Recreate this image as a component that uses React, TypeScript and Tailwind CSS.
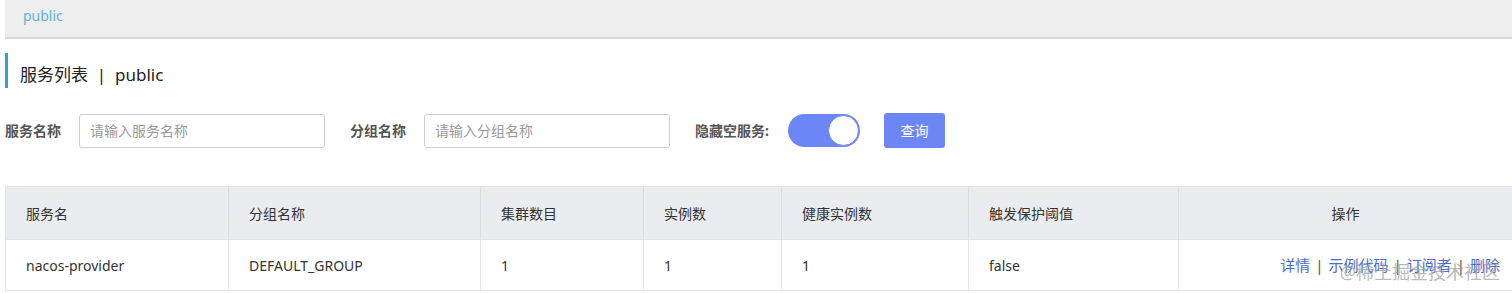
import { useState } from 'react';

const font = { fontFamily: '"Noto Sans", "Noto Sans CJK SC", sans-serif' };

const columns = [
  { title: '服务名', w: 'w-[223px]' },
  { title: '分组名称', w: 'w-[252px]' },
  { title: '集群数目', w: 'w-[163px]' },
  { title: '实例数', w: 'w-[138px]' },
  { title: '健康实例数', w: 'w-[187px]' },
  { title: '触发保护阈值', w: 'w-[210px]' },
];

const row = ['nacos-provider', 'DEFAULT_GROUP', '1', '1', '1', 'false'];

export default function App() {
  const [hideEmpty, setHideEmpty] = useState(true);

  return (
    <div className="h-[293px] w-[1512px] overflow-hidden bg-white text-[14px] text-[#333]" style={font}>
      <div className="ml-[5px] flex h-[39px] items-start border-b-2 border-[#d9d9d9] bg-[#eeeeee] pl-[18px] pt-[5px]">
        <span className="text-[14px] text-[#5cb3d6]">public</span>
      </div>

      <div className="ml-[5px] mt-[14px] flex h-[35px] items-center border-l-[3px] border-[#3e9ecb] pl-[12px] pt-[8px]">
        <span className="text-[17px] text-[#222]">服务列表&nbsp;&nbsp;|&nbsp;&nbsp;public</span>
      </div>

      <div className="mt-[25px] flex h-[35px] items-center pl-[5px]">
        <span className="w-[74px] text-[14px] font-bold text-[#555]">服务名称</span>
        <input placeholder="请输入服务名称" className="h-[34px] w-[246px] rounded-[3px] border border-[#cfcfcf] px-[10px] text-[14px] placeholder:text-[#999] outline-none" style={font} />
        <span className="ml-[25px] w-[74px] text-[14px] font-bold text-[#555]">分组名称</span>
        <input placeholder="请输入分组名称" className="h-[34px] w-[246px] rounded-[3px] border border-[#cfcfcf] px-[10px] text-[14px] placeholder:text-[#999] outline-none" style={font} />
        <span className="ml-[25px] w-[93px] text-[14px] font-bold text-[#555]">隐藏空服务:</span>
        <button onClick={() => setHideEmpty(!hideEmpty)} className={`flex h-[33px] w-[72px] items-center rounded-full px-[1px] ${hideEmpty ? 'justify-end bg-[#6c86f5]' : 'justify-start bg-[#ccc]'}`}>
          <span className="h-[31px] w-[31px] rounded-full border border-[#6c86f5] bg-white" />
        </button>
        <button className="ml-[24px] h-[35px] w-[61px] rounded-[3px] bg-[#6c86f5] text-[14px] text-white">查询</button>
      </div>

      <div className="ml-[5px] mt-[38px] border-y border-l border-[#e2e3e6]">
        <div className="flex h-[52px] bg-[#ebecef]">
          {columns.map((c) => (
            <div key={c.title} className={`${c.w} flex items-center border-r border-[#dcdde0] pl-[20px] text-[14px] text-[#333]`}>{c.title}</div>
          ))}
          <div className="flex flex-1 items-center justify-center text-[14px]">操作</div>
        </div>
        <div className="flex h-[51px] border-t border-[#e2e3e6]">
          {columns.map((c, i) => (
            <div key={c.title} className={`${c.w} flex items-center border-r border-[#e2e3e6] pl-[20px] text-[14px] text-[#333]`}>{row[i]}</div>
          ))}
          <div className="relative flex flex-1 items-center justify-end pr-[12px] text-[15px] text-[#4a6ccf]">
            <span>详情</span>
            <span className="mx-[5px] text-[#555]">|</span>
            <span>示例代码</span>
            <span className="mx-[5px] text-[#555]">|</span>
            <span>订阅者</span>
            <span className="mx-[5px] text-[#555]">|</span>
            <span>删除</span>
            <span className="pointer-events-none absolute right-[12px] top-[19px] text-[18px] text-[#9a9a9a]/70">@稀土掘金技术社区</span>
          </div>
        </div>
      </div>
    </div>
  );
}
